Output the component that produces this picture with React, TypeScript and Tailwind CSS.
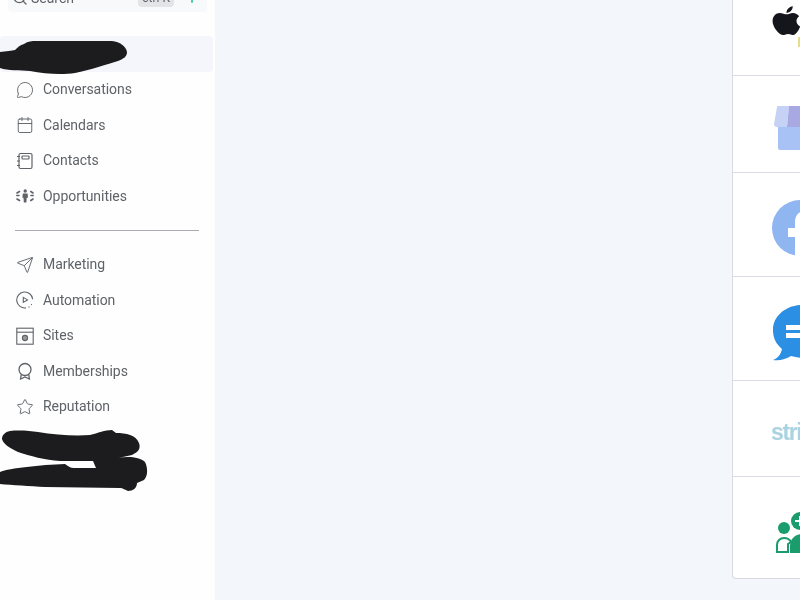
import React from 'react';
import { Calendar, MessageCircle, Plus, Search, Send, Star } from 'lucide-react';

const iconClass = 'h-[18px] w-[18px] flex-none text-[#5f6368]';

const ContactsIcon = () => (
  <svg viewBox="0 0 18 18" className={iconClass} fill="none" stroke="currentColor" strokeWidth="1.2">
    <rect x="3" y="1.5" width="13" height="15" rx="1.5" />
    <rect x="6" y="4" width="7" height="3" rx="0.8" />
    <path d="M1 4.5h3M1 9h3M1 13.5h3" />
  </svg>
);

const OpportunitiesIcon = () => (
  <svg viewBox="0 0 18 18" className={iconClass} fill="currentColor">
    <circle cx="9.2" cy="4" r="1.7" />
    <path d="M6.800 6.500h4.800l.4 4.200h-1.300l-.3 4.800H7.800l-.3-4.800H6.400z" />
    <path
      d="M3.500 4.500L1 6M0.800 8.500h2.200M1 12l2.500 1.500M14.800 4.500L17 6M15 8.500h2.200M14.800 13.500L17 12"
      stroke="currentColor"
      strokeWidth="1.6"
      strokeLinecap="round"
      fill="none"
    />
  </svg>
);

const AutomationIcon = () => (
  <svg viewBox="0 0 18 18" className={iconClass} fill="none" stroke="currentColor" strokeWidth="1.1">
    <path d="M16.700 8.200A8 8 0 1 0 10 16.900" />
    <path d="M7.300 6.400v5l4.200-2.500z" />
    <path d="M12.500 16.200l1-.5M15.200 14l.6-.9" />
  </svg>
);

const SitesIcon = () => (
  <svg viewBox="0 0 18 18" className={iconClass} fill="none" stroke="currentColor" strokeWidth="1.1">
    <rect x="0.800" y="1.200" width="16.400" height="16" />
    <path d="M0.800 5.200h16.400" />
    <circle cx="9" cy="11" r="2.600" fill="currentColor" fillOpacity="0.65" />
  </svg>
);

const MembershipsIcon = () => (
  <svg viewBox="0 0 18 18" className={iconClass} fill="none" stroke="currentColor" strokeWidth="1.3">
    <circle cx="9" cy="7.500" r="6" />
    <path d="M5.200 12.500L4.600 17l4.400-2 4.400 2-.6-4.500" />
  </svg>
);

const topItems = [
  { label: 'Conversations', icon: <MessageCircle className={iconClass} strokeWidth={1.25} /> },
  { label: 'Calendars', icon: <Calendar className={iconClass} strokeWidth={1.25} /> },
  { label: 'Contacts', icon: <ContactsIcon /> },
  { label: 'Opportunities', icon: <OpportunitiesIcon /> },
];

const bottomItems = [
  { label: 'Marketing', icon: <Send className={iconClass} strokeWidth={1.25} /> },
  { label: 'Automation', icon: <AutomationIcon /> },
  { label: 'Sites', icon: <SitesIcon /> },
  { label: 'Memberships', icon: <MembershipsIcon /> },
  { label: 'Reputation', icon: <Star className={iconClass} strokeWidth={1.25} /> },
];

const NavRow = ({ label, icon }: { label: string; icon: React.ReactNode }) => (
  <div className="flex h-[35.5px] items-center gap-[9px] pl-[16px]">
    {icon}
    <span className="text-[14px] tracking-[-0.05px] text-[#5f6368]">{label}</span>
  </div>
);

const Sidebar = () => (
  <aside className="w-[215px] flex-none bg-[#fefefe]">
    {/* search box is cut off by the top of the window */}
    <div className="mx-[8px] -mt-[16px] flex h-[28px] items-center rounded bg-[#f8f9fb] pl-[4px] pr-[8px]">
      <Search className="h-[16px] w-[16px] flex-none text-[#5f6368]" />
      <span className="ml-[3px] text-[14px] text-[#5f6368]">Search</span>
      <span className="ml-auto rounded bg-[#e3e4e8] px-[4px] text-[12px] leading-[18px] text-[#5f6368]">ctrl K</span>
      <Plus className="ml-[11px] h-[14px] w-[14px] flex-none text-[#34c98e]" strokeWidth={3} />
    </div>

    <div className="relative mt-[24.4px] mr-[2px] h-[35.5px] rounded bg-[#f5f6fb]">
      <svg viewBox="0 0 128 34" className="absolute left-0 top-[5px] h-[34px] w-[128px]">
        <path
          d="M0 11 C6 10 12 10 15 9 C18 6 20 4 24 3 C28 0 32 0 36 0 L112 0 C120 1 126 5 127 11 C127 16 123 18 118 20 C108 23 90 29 75 32 C62 34 45 33 30 30 C20 29 8 30 0 27 Z"
          fill="#1c1c1e"
        />
      </svg>
    </div>

    {topItems.map((item) => (
      <NavRow key={item.label} label={item.label} icon={item.icon} />
    ))}

    <div className="ml-[15px] mr-[16px] mt-[16px] mb-[16px] h-px bg-[#a9abb0]" />

    {bottomItems.map((item) => (
      <NavRow key={item.label} label={item.label} icon={item.icon} />
    ))}

    <svg viewBox="0 0 148 62" className="mt-[6px] h-[62px] w-[148px]">
      <path
        d="M10 1 C20 0 30 1 38 2 C55 5 75 6 90 5 C98 3 105 0 112 0 L116 3 C126 3 136 5 139 13 C141 19 138 22 132 25 L118 28 C128 26 140 27 145 32 C148 38 148 46 144 50 L137 53 C137 58 133 61 128 61 C125 60 123 58 120 58 L45 57 C30 56 12 55 0 54 L0 42 C10 38 40 35 65 34 C68 36 70 38 74 38 L96 38 L93 31 L60 31 C45 30 30 26 18 22 C10 18 3 14 2 9 C2 5 5 2 10 1 Z"
        fill="#1c1c1e"
      />
    </svg>
  </aside>
);

const AppleLogo = () => (
  <div className="relative h-[48px] w-[29px] flex-none">
    <svg viewBox="0 0 26 26" className="h-[29px] w-[29px]">
      <path
        d="M13.200 7.400c1.600 0 3.100-1.200 5.600-1.200 2.200 0 4.300 1.100 5.600 3-3.600 2.200-3.200 7.400.9 9.200-1.100 3-3.800 7.600-6.300 7.600-1.600 0-2.300-1-4.400-1s-3 1-4.500 1C6.300 26 0.500 18.800 0.500 13.600c0-4.500 3-7.400 6.400-7.400 2.500 0 4.400 1.200 6.300 1.200zM13 6.200c-.1-3 2.400-5.600 5.600-6 .2 3.200-2.600 5.900-5.600 6z"
        fill="#15151c"
      />
    </svg>
    {/* sliver of the next logo colour at the window edge */}
    <div className="absolute left-[26px] top-[31px] h-[10px] w-[2px] bg-[#e6dd8c]" />
  </div>
);

const StoreLogo = () => (
  <svg viewBox="0 0 50 44" className="h-[44px] w-[50px] flex-none">
    <path d="M4 20h40v22a2 2 0 0 1-2 2H6a2 2 0 0 1-2-2z" fill="#a9c2f5" />
    <path d="M3 1a1 1 0 0 1 1-1h11l-2 21h-10a3 3 0 0 1-3-3z" fill="#c6d2f5" />
    <path d="M15 0h25l3 21H13z" fill="#a8a9e3" />
  </svg>
);

const FacebookLogo = () => (
  <svg viewBox="0 0 56 56" className="h-[56px] w-[56px] flex-none">
    <circle cx="28" cy="28" r="28" fill="#8fb6f1" />
    <path d="M23 56V37h-7v-9h7v-6c0-7 4-11 10-11h6v9h-4c-3 0-4 2-4 4v4h8l-1 9h-7v19z" fill="#ffffff" />
  </svg>
);

const ChatLogo = () => (
  <svg viewBox="0 0 60 56" className="h-[56px] w-[60px] flex-none">
    <path d="M30 0C13 0 0 11 0 25c0 8 3 14 9 19-1 5-4 9-9 11 7 1 13-1 18-4 4 1 8 2 12 2 17 0 30-12 30-28S47 0 30 0z" fill="#2b8fe3" />
    <path d="M13 20h34v5H13zM13 28h34v5H13z" fill="#ffffff" />
  </svg>
);

const GroupLogo = () => (
  <svg viewBox="0 0 50 42" className="h-[42px] w-[50px] flex-none">
    <circle cx="8" cy="16" r="6" fill="#1a9c6c" />
    <circle cx="24" cy="9" r="9" fill="#1a9c6c" />
    <path d="M19 9h10M24 4v10" stroke="#ffffff" strokeWidth="2" />
    <path d="M1 40V33c0-4 3-7 7-7s6 2 7 4l-3 2v8z" fill="none" stroke="#1a9c6c" strokeWidth="2" />
    <path d="M14 41v-7c0-7 5-12 12-12s12 5 12 12v7z" fill="#1a9c6c" />
  </svg>
);

const IntegrationCard = () => (
  <div className="w-[68px] flex-none self-start overflow-hidden rounded-bl border-b border-l border-[#d8d9e3] bg-white">
    <div className="flex h-[76px] overflow-hidden border-b border-[#dcdde4] pl-[39px] pt-[6px]">
      <AppleLogo />
    </div>
    <div className="flex h-[97px] overflow-hidden border-b border-[#dcdde4] pl-[41px] pt-[30px]">
      <StoreLogo />
    </div>
    <div className="flex h-[104px] overflow-hidden border-b border-[#dcdde4] pl-[39px] pt-[27px]">
      <FacebookLogo />
    </div>
    <div className="flex h-[104px] overflow-hidden border-b border-[#dcdde4] pl-[40px] pt-[28px]">
      <ChatLogo />
    </div>
    <div className="flex h-[96px] items-center overflow-hidden whitespace-nowrap border-b border-[#dcdde4] pl-[38px] pt-[7px] font-['Liberation_Sans',sans-serif] text-[23px] font-bold tracking-[-1.4px] text-[#a9d3e0]">
      stripe
    </div>
    <div className="flex h-[101px] overflow-hidden pl-[43px] pt-[35px]">
      <GroupLogo />
    </div>
  </div>
);

export default function App() {
  return (
    <div className="flex h-[600px] w-[800px] overflow-hidden bg-[#f3f6fb] font-['Roboto',sans-serif] blur-[0.4px]">
      <Sidebar />
      <main className="flex flex-1 justify-end">
        <IntegrationCard />
      </main>
    </div>
  );
}
